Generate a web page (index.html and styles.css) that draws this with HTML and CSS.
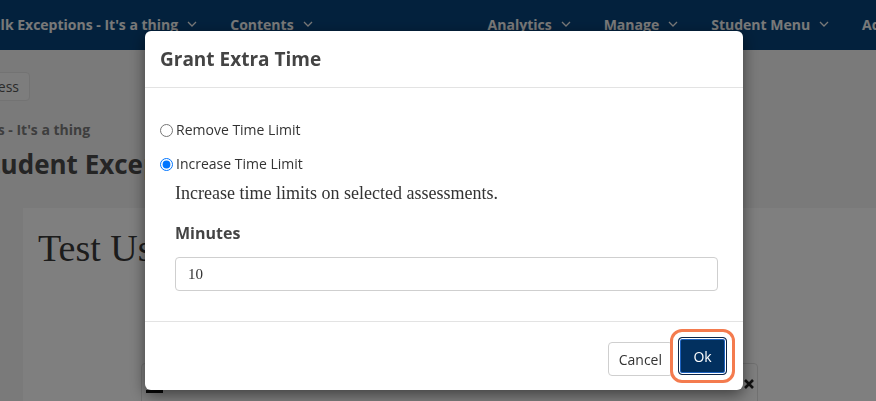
FILE: index.html
```html
<!DOCTYPE html>
<html lang="en">
<head>
<meta charset="utf-8">
<title>Grant Extra Time</title>
<link rel="stylesheet" href="styles.css">
</head>
<body>
<div class="page">
  <header class="nav">
    <div class="nav-group nav-left">
      <span class="nav-item">Bulk Exceptions - It's a thing<svg class="chev" viewBox="0 0 10 6" width="10" height="6"><path d="M1 1l4 4 4-4"/></svg></span>
      <span class="nav-item">Contents<svg class="chev" viewBox="0 0 10 6" width="10" height="6"><path d="M1 1l4 4 4-4"/></svg></span>
    </div>
    <div class="nav-group nav-right">
      <span class="nav-item">Analytics<svg class="chev" viewBox="0 0 10 6" width="10" height="6"><path d="M1 1l4 4 4-4"/></svg></span>
      <span class="nav-item">Manage<svg class="chev" viewBox="0 0 10 6" width="10" height="6"><path d="M1 1l4 4 4-4"/></svg></span>
      <span class="nav-item">Student Menu<svg class="chev" viewBox="0 0 10 6" width="10" height="6"><path d="M1 1l4 4 4-4"/></svg></span>
      <span class="nav-item">Admin<svg class="chev" viewBox="0 0 10 6" width="10" height="6"><path d="M1 1l4 4 4-4"/></svg></span>
    </div>
  </header>
  <main class="main">
    <div class="toolbar"><button class="btn-back" type="button">Back to Progress</button></div>
    <div class="crumb">Bulk Exceptions - It's a thing</div>
    <h1 class="title">Student Exceptions</h1>
    <section class="card">
      <h2 class="user">Test User</h2>
      <div class="panel">
        <span class="panel-dark"></span>
        <svg class="panel-x" viewBox="0 0 12 12" width="12" height="12"><path d="M2 2l8 8M10 2l-8 8"/></svg>
      </div>
    </section>
  </main>
</div>
<div class="backdrop"></div>
<div class="modal" role="dialog" aria-labelledby="mtitle">
  <div class="modal-header">
    <h4 class="modal-title" id="mtitle">Grant Extra Time</h4>
  </div>
  <div class="modal-body">
    <label class="radio-row"><input type="radio" name="mode"> Remove Time Limit</label>
    <label class="radio-row second"><input type="radio" name="mode" checked> Increase Time Limit</label>
    <div class="group">
      <p class="desc">Increase time limits on selected assessments.</p>
      <label class="field-label" for="minutes">Minutes</label>
      <input class="field" id="minutes" type="text" value="10">
    </div>
  </div>
  <div class="modal-footer">
    <button class="btn btn-cancel" type="button">Cancel</button>
    <button class="btn btn-ok" type="button">Ok</button>
  </div>
</div>
</body>
</html>
```
FILE: styles.css
```css
* { box-sizing: border-box; }
html, body { margin: 0; padding: 0; }
body {
  width: 876px;
  height: 401px;
  overflow: hidden;
  background: #f5f5f5;
  font-family: "Open Sans", "Liberation Sans", sans-serif;
  color: #333;
}
.page { width: 876px; height: 401px; overflow: hidden; }

.nav {
  height: 50px;
  background: #07437a;
  display: flex;
  align-items: center;
  padding-bottom: 1px;
  white-space: nowrap;
}
.nav-group { display: flex; gap: 33px; flex: none; }
.nav-left { margin-left: -18px; }
.nav-right { margin-left: 175px; }
.nav-item {
  display: flex;
  align-items: center;
  gap: 9px;
  color: #f2f2f2;
  font-weight: 700;
  font-size: 14px;
  line-height: 20px;
}
.chev { fill: none; stroke: #f2f2f2; stroke-width: 1.3; margin-top: -1px; }

.main { padding-top: 22px; }
.toolbar { display: flex; justify-content: flex-end; width: 30px; height: 29px; }
.btn-back {
  flex: none;
  height: 29px;
  padding: 0 10px;
  border: 1px solid #e6e6e6;
  border-radius: 4px;
  background: #fbfbfb;
  font-family: "Open Sans", sans-serif;
  font-size: 14px;
  color: #555;
  white-space: nowrap;
}
.crumb {
  margin: 19px 0 0 -106px;
  font-size: 14px;
  line-height: 20px;
  font-weight: 700;
  color: #7c7c7c;
  white-space: nowrap;
}
.title {
  margin: 7px 0 0 -25px;
  font-size: 26px;
  line-height: 34px;
  font-weight: 700;
  color: #4a4a4a;
  white-space: nowrap;
}
.card {
  margin: 27px 0 0 23px;
  background: #fff;
  padding: 18px 0 0 15px;
  height: 200px;
}
.user {
  margin: 0;
  font-family: "Liberation Serif", serif;
  font-weight: 400;
  font-size: 38px;
  line-height: 44px;
  color: #383838;
  white-space: nowrap;
}
.panel {
  margin: 93px 0 0 103px;
  width: 617px;
  height: 80px;
  border: 1px solid #e2e2e2;
  border-radius: 4px;
  padding: 14px 2px 0 4px;
  display: flex;
  justify-content: space-between;
  align-items: flex-start;
}
.panel-dark { width: 17px; height: 3px; margin-top: 12px; background: #111; }
.panel-x { fill: none; stroke: #222; stroke-width: 2.6; }

.backdrop {
  position: fixed;
  inset: 0;
  background: rgba(0, 0, 0, 0.5);
}

.modal {
  position: fixed;
  left: 145px;
  top: 31px;
  width: 598px;
  background: #fff;
  border-radius: 6px;
  box-shadow: 0 5px 15px rgba(0, 0, 0, 0.5);
}
.modal-header {
  padding: 15px;
  border-bottom: 1px solid #e3e3e3;
}
.modal-title {
  margin: 0;
  font-size: 19px;
  line-height: 26px;
  font-weight: 700;
  color: #444;
}
.modal-body {
  padding: 32px 25px 30px 15px;
  display: flex;
  flex-direction: column;
}
.radio-row {
  display: flex;
  align-items: center;
  font-size: 14px;
  line-height: 20px;
  color: #333;
}
.radio-row input {
  width: 13px;
  height: 13px;
  margin: 0 3px 0 0;
}
.radio-row.second { margin-top: 14px; }
.group {
  padding-left: 15px;
  display: flex;
  flex-direction: column;
}
.desc {
  margin: 7px 0 0;
  font-family: "Liberation Serif", serif;
  font-size: 18px;
  line-height: 25px;
  color: #333;
}
.field-label {
  margin-top: 16px;
  font-size: 16px;
  line-height: 22px;
  font-weight: 700;
  color: #444;
}
.field {
  margin-top: 13px;
  height: 34px;
  border: 1px solid #cfcfcf;
  border-radius: 4px;
  padding: 0 12px;
  font-family: "Liberation Serif", serif;
  font-size: 15px;
  color: #333;
}
.modal-footer {
  border-top: 1px solid #e3e3e3;
  padding: 15px 16px 15px 15px;
  display: flex;
  justify-content: flex-end;
  align-items: flex-end;
  gap: 5px;
}
.btn {
  font-family: "Open Sans", sans-serif;
  font-size: 14px;
  border-radius: 4px;
  cursor: pointer;
}
.btn-cancel {
  height: 34px;
  padding: 0 10px;
  background: #fff;
  border: 1px solid #cfcfcf;
  color: #333;
  margin-bottom: -1px;
}
.btn-ok {
  height: 38px;
  width: 49px;
  padding: 0;
  background: #02305f;
  border: 1px solid #0b2447;
  color: #fff;
  box-shadow: inset 0 0 0 1px #fff, inset 0 0 0 2px #1d62c0;
  outline: 3px solid #f47b4e;
  outline-offset: 5px;
}
```
